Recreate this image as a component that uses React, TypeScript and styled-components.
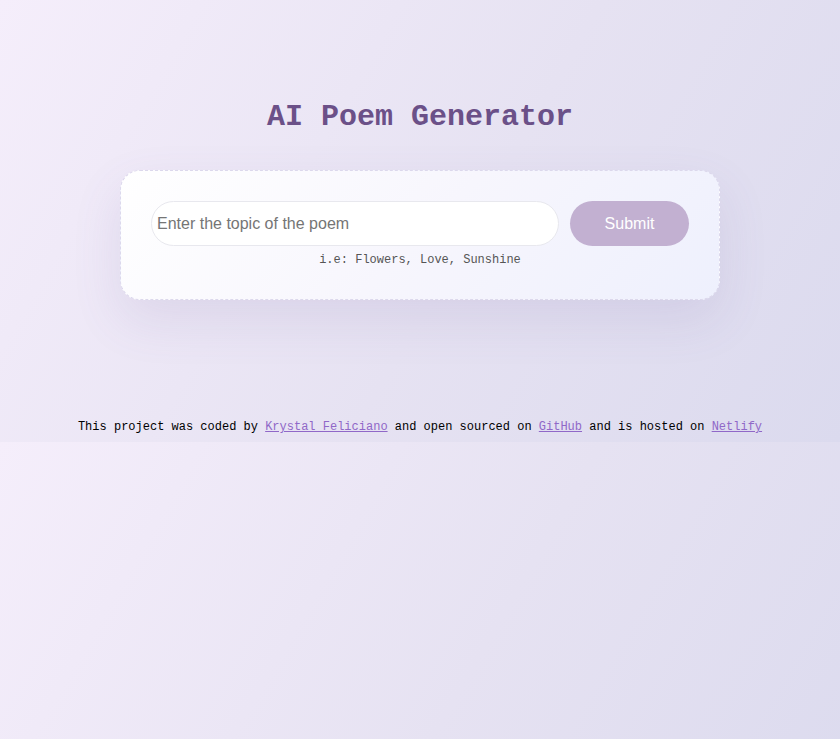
import styled, { createGlobalStyle } from "styled-components";

const GlobalStyle = createGlobalStyle`
  body {
    margin: 8px;
    background: linear-gradient(120deg, #f5eefb 0%, #e6e2f2 55%, #dbdaee 100%);
    font-family: "Liberation Mono", "Courier New", monospace;
  }
`;

const Container = styled.div`
  padding-top: 91px;
  display: flex;
  flex-direction: column;
  align-items: center;
`;

const Title = styled.h1`
  margin: 0;
  font-family: "Liberation Mono", "Courier New", monospace;
  font-weight: 700;
  font-size: 30px;
  line-height: 36px;
  color: #6b5088;
`;

const Card = styled.div`
  box-sizing: border-box;
  width: 600px;
  margin-top: 35px;
  padding: 30px 30px 32px;
  border: 1px dashed #dcd8ec;
  border-radius: 20px;
  background: linear-gradient(135deg, #ffffff 0%, #f7f6fd 50%, #eef0fd 100%);
  box-shadow: 0 20px 50px rgba(110, 90, 160, 0.12);
`;

const Form = styled.form`
  display: flex;
  gap: 11px;
`;

const Input = styled.input`
  box-sizing: border-box;
  flex: 1;
  height: 45px;
  padding: 0 5px;
  border: 1px solid #e8e8ee;
  border-radius: 25px;
  background: #ffffff;
  font-family: "Liberation Sans", Arial, sans-serif;
  font-size: 16px;
  color: #333;
  outline: none;

  &::placeholder {
    color: #757575;
  }
`;

const Button = styled.button`
  width: 119px;
  height: 45px;
  border: none;
  border-radius: 25px;
  background: #c2b0d1;
  color: #ffffff;
  font-family: "Liberation Sans", Arial, sans-serif;
  font-size: 16px;
  cursor: pointer;
`;

const Hint = styled.div`
  margin-top: 7px;
  text-align: center;
  font-family: "Liberation Mono", "Courier New", monospace;
  font-size: 12px;
  line-height: 14px;
  color: #555555;
`;

const Footer = styled.footer`
  margin-top: 120px;
  text-align: center;
  font-family: "Liberation Mono", "Courier New", monospace;
  font-size: 12px;
  line-height: 14px;
  color: #000000;
`;

const Link = styled.a`
  color: #9068c8;
`;

export default function App() {
  return (
    <>
      <GlobalStyle />
      <Container>
        <Title>AI Poem Generator</Title>
        <Card>
          <Form onSubmit={(e) => e.preventDefault()}>
            <Input type="search" placeholder="Enter the topic of the poem" />
            <Button type="submit">Submit</Button>
          </Form>
          <Hint>i.e: Flowers, Love, Sunshine</Hint>
        </Card>
        <Footer>
          This project was coded by <Link href="#">Krystal Feliciano</Link> and
          open sourced on <Link href="#">GitHub</Link> and is hosted on{" "}
          <Link href="#">Netlify</Link>
        </Footer>
      </Container>
    </>
  );
}
